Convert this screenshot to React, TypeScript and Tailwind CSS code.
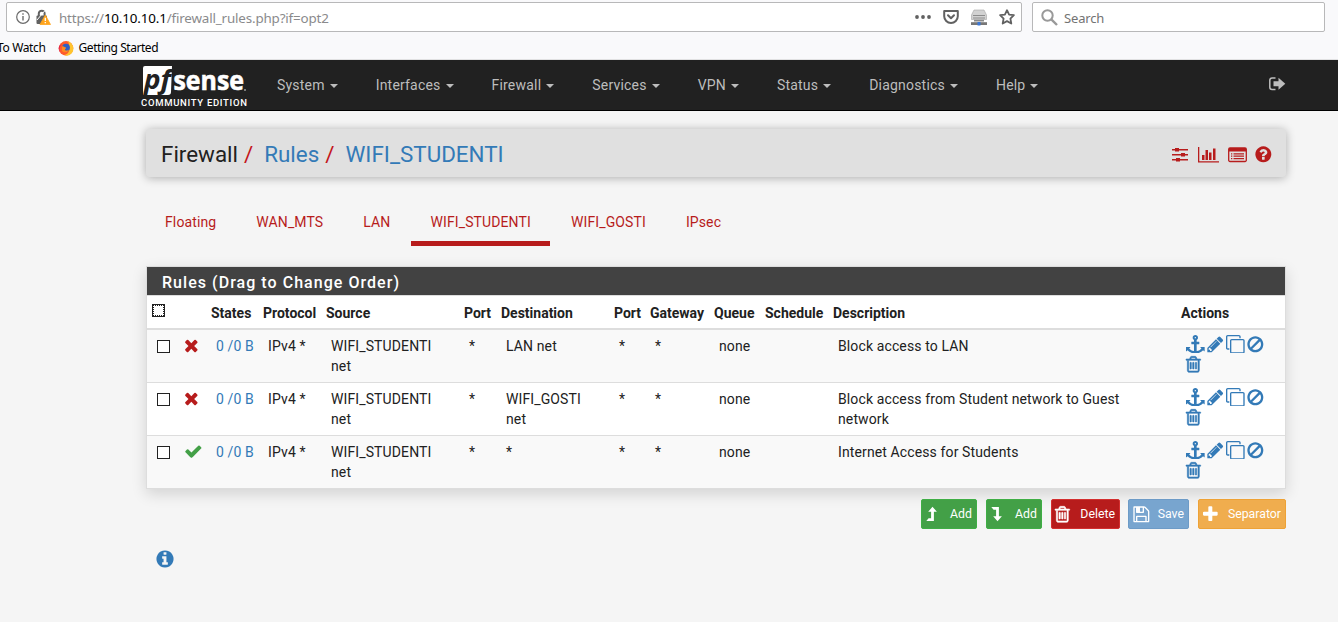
import React from 'react';

const paths = {
  times: 'M1490 1322q0 40-28 68l-136 136q-28 28-68 28t-68-28l-294-294-294 294q-28 28-68 28t-68-28l-136-136q-28-28-28-68t28-68l294-294-294-294q-28-28-28-68t28-68l136-136q28-28 68-28t68 28l294 294 294-294q28-28 68-28t68 28l136 136q28 28 28 68t-28 68l-294 294 294 294q28 28 28 68z',
  check: 'M1671 566q0 40-28 68l-724 724-136 136q-28 28-68 28t-68-28l-136-136-362-362q-28-28-28-68t28-68l136-136q28-28 68-28t68 28l294 295 656-657q28-28 68-28t68 28l136 136q28 28 28 68z',
  plus: 'M1600 736v192q0 40-28 68t-68 28h-416v416q0 40-28 68t-68 28h-192q-40 0-68-28t-28-68v-416h-416q-40 0-68-28t-28-68v-192q0-40 28-68t68-28h416v-416q0-40 28-68t68-28h192q40 0 68 28t28 68v416h416q40 0 68 28t28 68z',
  pencil: 'M491 1536l91-91-235-235-91 91v107h128v128h107zm523-928q0-22-22-22-10 0-17 7l-542 542q-7 7-7 17 0 22 22 22 10 0 17-7l542-542q7-7 7-17zm-54-192l416 416-832 832h-416v-416zm683 96q0 53-37 90l-166 166-416-416 166-165q36-38 90-38 53 0 91 38l235 234q37 39 37 91z',
  trash: 'M704 736v576q0 14-9 23t-23 9h-64q-14 0-23-9t-9-23v-576q0-14 9-23t23-9h64q14 0 23 9t9 23zm256 0v576q0 14-9 23t-23 9h-64q-14 0-23-9t-9-23v-576q0-14 9-23t23-9h64q14 0 23 9t9 23zm256 0v576q0 14-9 23t-23 9h-64q-14 0-23-9t-9-23v-576q0-14 9-23t23-9h64q14 0 23 9t9 23zm128 724v-948h-896v948q0 22 7 40.5t14.5 27 10.5 8.5h832q3 0 10.5-8.5t14.5-27 7-40.5zm-672-1076h448l-48-117q-7-9-17-11h-317q-10 2-17 11zm928 32v64q0 14-9 23t-23 9h-96v948q0 83-47 143.5t-113 60.5h-832q-66 0-113-58.5t-47-141.5v-952h-96q-14 0-23-9t-9-23v-64q0-14 9-23t23-9h309l70-167q15-37 54-63t79-26h320q40 0 79 26t54 63l70 167h309q14 0 23 9t9 23z',
  ban: 'M1440 893q0-161-87-295l-754 753q137 89 297 89 111 0 211.5-43.5t173.5-116.5 116-174.5 43-212.5zm-999 299l755-754q-135-91-300-91-148 0-273 73t-198 199-73 274q0 162 89 299zm1223-299q0 157-61 300t-163.5 246-245 164-298.5 61-298.5-61-245-164-163.5-246-61-300 61-299.5 163.5-245.5 245-164 298.5-61 298.5 61 245 164 163.5 245.5 61 299.5z',
  clone: 'M1664 1632v-1088q0-13-9.5-22.5t-22.5-9.5h-1088q-13 0-22.5 9.5t-9.5 22.5v1088q0 13 9.5 22.5t22.5 9.5h1088q13 0 22.5-9.5t9.5-22.5zm128-1088v1088q0 66-47 113t-113 47h-1088q-66 0-113-47t-47-113v-1088q0-66 47-113t113-47h1088q66 0 113 47t47 113zm-384-384v160h-128v-160q0-13-9.5-22.5t-22.5-9.5h-1088q-13 0-22.5 9.5t-9.5 22.5v1088q0 13 9.5 22.5t22.5 9.5h160v128h-160q-66 0-113-47t-47-113v-1088q0-66 47-113t113-47h1088q66 0 113 47t47 113z',
  anchor: 'M960 256q0-26-19-45t-45-19-45 19-19 45 19 45 45 19 45-19 19-45zm832 928v352q0 22-20 30-8 2-12 2-12 0-23-9l-93-93q-119 143-318.5 226.5t-429.5 83.5-429.5-83.5-318.5-226.5l-93 93q-9 9-23 9-4 0-12-2-20-8-20-30v-352q0-14 9-23t23-9h352q22 0 30 20 8 19-7 35l-100 100q67 91 189.5 153.5t271.5 82.5v-647h-192q-26 0-45-19t-19-45v-128q0-26 19-45t45-19h192v-163q-58-34-93-92.5t-35-128.5q0-106 75-181t181-75 181 75 75 181q0 70-35 128.5t-93 92.5v163h192q26 0 45 19t19 45v128q0 26-19 45t-45 19h-192v647q149-20 271.5-82.5t189.5-153.5l-100-100q-15-16-7-35 8-20 30-20h352q14 0 23 9t9 23z',
  save: 'M512 1536h768v-384h-768v384zm896 0h128v-896q0-14-10-38.5t-20-34.5l-281-281q-10-10-34-20t-39-10v416q0 40-28 68t-68 28h-576q-40 0-68-28t-28-68v-416h-128v1280h128v-416q0-40 28-68t68-28h832q40 0 68 28t28 68v416zm-384-928v-320q0-13-9.5-22.5t-22.5-9.5h-192q-13 0-22.5 9.5t-9.5 22.5v320q0 13 9.5 22.5t22.5 9.5h192q13 0 22.5-9.5t9.5-22.5zm640 32v928q0 40-28 68t-68 28h-1344q-40 0-68-28t-28-68v-1344q0-40 28-68t68-28h928q40 0 88 20t76 48l280 280q28 28 48 76t20 88z',
  question: 'M1024 1376v-192q0-14-9-23t-23-9h-192q-14 0-23 9t-9 23v192q0 14 9 23t23 9h192q14 0 23-9t9-23zm256-672q0-88-55.5-163t-138.5-116-170-41q-243 0-371 213-15 24 8 42l132 100q7 6 19 6 16 0 25-12 53-68 86-92 34-24 86-24 48 0 85.5 26t37.5 59q0 38-20 61t-68 45q-63 28-115.5 86.5t-52.5 125.5v36q0 14 9 23t23 9h192q14 0 23-9t9-23q0-19 21.5-49.5t54.5-49.5q32-18 49-28.5t46-35 44.5-48 28-60.5 12.5-81zm384 192q0 209-103 385.5t-279.5 279.5-385.5 103-385.5-103-279.5-279.5-103-385.5 103-385.5 279.5-279.5 385.5-103 385.5 103 279.5 279.5 103 385.5z',
  info: 'M1152 1376v-160q0-14-9-23t-23-9h-96v-512q0-14-9-23t-23-9h-320q-14 0-23 9t-9 23v160q0 14 9 23t23 9h96v320h-96q-14 0-23 9t-9 23v160q0 14 9 23t23 9h448q14 0 23-9t9-23zm-128-896v-160q0-14-9-23t-23-9h-192q-14 0-23 9t-9 23v160q0 14 9 23t23 9h192q14 0 23-9t9-23zm640 416q0 209-103 385.5t-279.5 279.5-385.5 103-385.5-103-279.5-279.5-103-385.5 103-385.5 279.5-279.5 385.5-103 385.5 103 279.5 279.5 103 385.5z',
};

const Icon: React.FC<{ name: keyof typeof paths; className?: string }> = ({ name, className }) => (
  <svg viewBox="0 0 1792 1792" fill="currentColor" className={className ?? 'size-[18.67px] shrink-0'}>
    <path d={paths[name]} stroke="currentColor" strokeWidth={name === 'trash' ? 55 : 0} />
  </svg>
);

const LevelArrow: React.FC<{ down?: boolean }> = ({ down }) => (
  <svg viewBox="0 0 12 16" fill="currentColor" className="w-3 h-4 shrink-0">
    {down ? (
      <path d="M0.3 1h7.6v9.2h3L6.5 15.3 2.2 10.2h2.9V3.8H2.6z" />
    ) : (
      <path d="M0.3 15h7.6V5.8h3L6.5 0.7 2.2 5.8h2.9v6.4H2.6z" />
    )}
  </svg>
);

const menus = ['System', 'Interfaces', 'Firewall', 'Services', 'VPN', 'Status', 'Diagnostics', 'Help'];

const tabs = ['Floating', 'WAN_MTS', 'LAN', 'WIFI_STUDENTI', 'WIFI_GOSTI', 'IPsec'];

const columns = ['', '', 'States', 'Protocol', 'Source', 'Port', 'Destination', 'Port', 'Gateway', 'Queue', 'Schedule', 'Description', 'Actions'];
const widths = [31, 28, 52, 63, 138, 37, 113, 36, 64, 51, 68, 348, 109];

const rules = [
  { pass: false, dest: 'LAN net', description: 'Block access to LAN' },
  { pass: false, dest: 'WIFI_GOSTI net', description: 'Block access from Student network to Guest network' },
  { pass: true, dest: '*', description: 'Internet Access for Students' },
];

const Browser = () => (
  <div className="h-[60px] bg-[#f9f9fb] border-b border-[#e1e1e2] font-['Noto_Sans',sans-serif] overflow-hidden">
    <div className="flex pt-[2px] pl-[6px] gap-[10px]">
      <div className="w-[1016px] h-[30px] bg-white border border-[#b8b8b9] rounded-[2px] flex items-center pl-[9px] pr-[6px]">
        <svg viewBox="0 0 14 14" className="size-[14px]" fill="none" stroke="#6b6b6b">
          <circle cx="7" cy="7" r="6.3" strokeWidth="1.2" />
          <path d="M7 6v4.6M7 3.3v1.5" strokeWidth="1.4" />
        </svg>
        <svg viewBox="0 0 16 16" className="size-4 ml-[5px]">
          <path d="M3.8 7V4.600a2.900 2.900 0 0 1 5.800 0V7" fill="none" stroke="#616161" strokeWidth="2" />
          <rect x="1.5" y="6.500" width="10.500" height="8.500" rx="1" fill="#616161" />
          <path d="M2 11L10 1.500" stroke="#fff" strokeWidth="1" />
          <path d="M10.300 6l5.200 9.500H5z" fill="#ffa41c" stroke="#ffa41c" strokeWidth=".8" strokeLinejoin="round" />
          <path d="M10.300 8.800v3.200M10.300 13v1.300" stroke="#fff" strokeWidth="1.300" />
        </svg>
        <span className="ml-[8px] mt-[2px] text-[13.4px] leading-5 tracking-[-0.16px] text-[#8a8a8c] whitespace-nowrap w-[600px]">
          https://<span className="text-black">10.10.10.1</span>/firewall_rules.php?if=opt2
        </span>
        <div className="ml-auto flex items-center gap-[11px] text-[#616161]">
          <svg viewBox="0 0 18 16" className="w-[18px] h-4" fill="currentColor">
            <circle cx="3" cy="8" r="1.9" />
            <circle cx="9" cy="8" r="1.9" />
            <circle cx="15" cy="8" r="1.9" />
          </svg>
          <svg viewBox="0 0 16 16" className="size-4" fill="none" stroke="currentColor" strokeWidth="2" strokeLinejoin="round">
            <path d="M1.2 2h13.6v5.2a6.8 6.8 0 0 1-13.6 0z" />
            <path d="M5 6.2l3 3 3-3" strokeLinecap="round" />
          </svg>
          <svg viewBox="0 0 18 17" className="w-[18px] h-[17px]">
            <path d="M4 1h10l2.500 5v4.500h-15V6z" fill="#d2d2d2" stroke="#a5a5a5" strokeWidth=".6" />
            <path d="M3 6.500h12M3 9h12" stroke="#8c8c8c" />
            <path d="M4 10.800h10v1.700H4z" fill="#8a8a8a" />
            <path d="M1 13.200h16v2.800H1z" fill="#777" />
            <path d="M7.500 13h3v3.500h-3z" fill="#3b78d8" />
          </svg>
          <svg viewBox="0 0 16 16" className="size-4" fill="none" stroke="currentColor" strokeWidth="1.8" strokeLinejoin="round">
            <path d="M8 1.2l2.1 4.4 4.8.6-3.5 3.4.9 4.9L8 12.1l-4.3 2.4.9-4.9L1.1 6.2l4.8-.6z" />
          </svg>
        </div>
      </div>
      <div className="w-[293px] h-[30px] bg-white border border-[#b8b8b9] rounded-[2px] flex items-center pl-[8px]">
        <svg viewBox="0 0 17 17" className="size-[17px]" fill="none" stroke="#999" strokeWidth="2">
          <circle cx="6.500" cy="6.500" r="5.200" />
          <path d="M10.300 10.300l5.700 5.700" strokeWidth="2.400" />
        </svg>
        <span className="ml-[6px] mt-[3px] text-[13px] tracking-[-0.15px] text-[#737373]">Search</span>
      </div>
    </div>
    <div className="flex items-center h-[28px] mt-[2px] text-[12px] text-black -ml-[3px] whitespace-nowrap">
      <span className="tracking-[-0.35px]">To Watch</span>
      <svg viewBox="0 0 16 16" className="size-4 ml-[12px]">
        <circle cx="8" cy="8.300" r="7.200" fill="#ff5a2c" />
        <path d="M1.200 6a7.300 7.300 0 0 0 2 8A7.200 7.200 0 0 1 4 4z" fill="#e3254f" />
        <path d="M10 1a8 8 0 0 1 4 12A7 7 0 0 1 6 15c5-1 7-5 4-14z" fill="#ffc42e" />
        <circle cx="8" cy="7.600" r="3.900" fill="#2f5fc4" />
        <path d="M4 6.500c2-.6 2 1 4 1 .5 1-1.500 1.500-1 2.500 1 1 3 .5 4-.5-.5 3-5 4-7 1.300z" fill="#ff8a1f" />
      </svg>
      <span className="ml-[5px] tracking-[-0.45px]">Getting Started</span>
    </div>
  </div>
);

const Navbar = () => (
  <nav className="h-[51px] bg-[#212121] border-b border-black flex text-[#bdbdbd] pl-[140px]">
    <div className="w-[137px] shrink-0">
      <svg viewBox="0 0 110 50" className="w-[110px] h-[50px]">
        <path d="M5 6h27l-1 26a3 3 0 0 1-3 3H3V8q0-2 2-2z" fill="#fff" />
        <text x="4" y="28.500" fontFamily="Open Sans" fontWeight="700" fontStyle="italic" fontSize="27" textLength="27" lengthAdjust="spacingAndGlyphs" fill="#212121">pf</text>
        <text x="33.500" y="30" fontFamily="Open Sans" fontWeight="700" fontSize="27" textLength="70.500" lengthAdjust="spacingAndGlyphs" fill="#fff" stroke="#fff" strokeWidth=".6">sense</text>
        <circle cx="105" cy="30" r="1" fill="#999" />
        <text x="1" y="46" fontFamily="Roboto" fontWeight="500" fontSize="9.500" textLength="106" fill="#fff">COMMUNITY EDITION</text>
      </svg>
    </div>
    <ul className="flex items-center gap-[38px] text-[14px] tracking-[0.2px]">
      {menus.map((menu) => (
        <li key={menu} className="flex items-center">
          {menu}
          <span className="ml-[5px] mt-[2px] border-x-4 border-x-transparent border-t-4 border-t-[#bdbdbd]" />
        </li>
      ))}
    </ul>
    <svg viewBox="0 0 17 14" className="w-[17px] h-[14px] ml-auto mr-[52px] mt-[17px]" fill="#bdbdbd">
      <path d="M6.500 1H3a2.200 2.200 0 0 0-2.200 2.200v7A2.200 2.200 0 0 0 3 12.400h3.500" fill="none" stroke="#bdbdbd" strokeWidth="1.500" />
      <path d="M4.500 4.300h5V0.800L16.300 6.700 9.500 12.800V9.200h-5z" />
    </svg>
  </nav>
);

const Header = () => (
  <header className="h-[48px] mt-[18px] bg-[#e0e0e0] rounded-[4px] shadow-[0_1px_10px_rgba(0,0,0,0.3)] flex items-center justify-between pl-[15px] pr-[13px] pt-[3px]">
    <h1 className="text-[22.4px] leading-none text-[#212121] flex">
      Firewall<span className="text-[#c4161c] ml-[6px]">/</span>
      <span className="text-[#337ab7] ml-[11px]">Rules</span>
      <span className="text-[#c4161c] ml-[6px]">/</span>
      <span className="text-[#337ab7] ml-[11px]">WIFI_STUDENTI</span>
    </h1>
    <div className="flex items-center text-[#b71c1c]">
      <svg viewBox="0 0 16 16" className="size-4" fill="currentColor">
        <path d="M0 2h16v1.500H0zM0 7h16v1.500H0zM0 12h16v1.500H0z" />
        <path d="M3 1h4v3.500H3zM9 6h4v3.500H9zM4 11h4v3.500H4z" />
      </svg>
      <svg viewBox="0 0 21 16" className="w-[21px] h-4 ml-[10px]" fill="currentColor">
        <path d="M0 0h1.300v14.200H21v1.300H0zM4 8h2.500v5H4zM7.500 3H10v10H7.500zM11 5.500h2.500V13H11zM15 1.500h2.500V13H15z" />
      </svg>
      <svg viewBox="0 0 19 16" className="w-[19px] h-4 ml-[9px]">
        <path d="M2 1h15a1.300 1.300 0 0 1 1.300 1.300v10.900a1.300 1.300 0 0 1-1.300 1.300H2a1.300 1.300 0 0 1-1.300-1.300V2.300A1.300 1.300 0 0 1 2 1z" fill="none" stroke="currentColor" strokeWidth="1.300" />
        <path d="M1 1h17v3.500H1zM3 6.200h1.300v1.200H3zM3 8.600h1.300v1.200H3zM3 11h1.300v1.200H3zM5.500 6.200h10.500v1.200H5.500zM5.500 8.600h10.500v1.200H5.500zM5.500 11h10.500v1.200H5.500z" fill="currentColor" />
      </svg>
      <Icon name="question" className="size-[18.67px] ml-[7px]" />
    </div>
  </header>
);

const RulesTable = () => (
  <section className="mt-[20px] border border-[#ddd] w-[1140px] shadow-[0_5px_14px_rgba(0,0,0,0.14)] bg-white">
    <h2 className="h-[28px] bg-[#424242] text-white text-[16px] leading-[31px] font-medium tracking-[1.04px] pl-[15px]">
      Rules (Drag to Change Order)
    </h2>
    <table className="table-fixed w-[1138px] border-collapse text-[14px] leading-5">
      <colgroup>
        {widths.map((width, i) => (
          <col key={i} style={{ width }} />
        ))}
      </colgroup>
      <thead>
        <tr className="h-[33px] border-t border-[#ddd] border-b-2">
          {columns.map((column, i) => (
            <th key={i} className="px-[5px] pt-[2px] text-left font-bold align-middle whitespace-nowrap">
              {i === 0 ? (
                <span className="block size-[13px] border border-[#222] bg-white -mt-[4px]">
                  <span className="block size-[11px] border border-dotted border-[#222]" />
                </span>
              ) : (
                column
              )}
            </th>
          ))}
        </tr>
      </thead>
      <tbody className="tracking-[0.12px]">
        {rules.map((rule, i) => (
          <tr key={i} className="h-[53px] border-b border-[#ddd] last:border-b-0 odd:bg-[#f9f9f9] align-top [&>td]:px-[10px] [&>td]:pt-[6px] [&>td]:pb-[6px]">
            <td>
              <span className="block size-[13px] border border-[#222] bg-white mt-[4px]" />
            </td>
            <td className="!px-0">
              <div className={rule.pass ? 'text-[#43a047] ml-[6px]' : 'text-[#b71c1c] ml-[4px]'}>
                <Icon name={rule.pass ? 'check' : 'times'} />
              </div>
            </td>
            <td className="text-[#337ab7] whitespace-nowrap">0 /0 B</td>
            <td className="whitespace-nowrap">IPv4 *</td>
            <td>WIFI_STUDENTI net</td>
            <td>*</td>
            <td>{rule.dest}</td>
            <td>*</td>
            <td>*</td>
            <td>none</td>
            <td />
            <td>{rule.description}</td>
            <td className="!pr-0 text-[#337ab7]">
              <div className="flex h-5 items-start -mt-[1px]">
                <Icon name="anchor" />
                <Icon name="pencil" className="size-[18.67px] ml-[1px]" />
                <Icon name="clone" className="size-[18.67px] ml-[2px]" />
                <Icon name="ban" className="size-[18.67px] ml-[1.500px]" />
              </div>
              <Icon name="trash" className="size-[18.67px] -ml-[2px]" />
            </td>
          </tr>
        ))}
      </tbody>
    </table>
  </section>
);

const Actions = () => (
  <div className="flex justify-end gap-[9px] mt-[10px] text-white text-[12.3px] [&>button]:h-[30px] [&>button]:flex [&>button]:items-center [&>button]:justify-between [&>button]:rounded-[2px] [&>button]:border [&>button]:pr-[4px]">
    <button className="w-[56px] bg-[#43a047] border-[#3fae45] pl-[4px]"><LevelArrow />Add</button>
    <button className="w-[56px] bg-[#43a047] border-[#3fae45] pl-[4px]"><LevelArrow down />Add</button>
    <button className="w-[69px] bg-[#b71c1c] border-[#d32f2f] pl-[1px]"><Icon name="trash" />Delete</button>
    <button className="w-[61px] bg-[#78a5cf] border-[#6d9bc7] pl-[3px] -ml-px"><Icon name="save" />Save</button>
    <button className="w-[88px] bg-[#f0ad4e] border-[#eea236] pl-[2px]"><Icon name="plus" />Separator</button>
  </div>
);

export default function App() {
  return (
    <div className="h-[622px] w-[1338px] overflow-hidden bg-[#f5f5f5] font-[Roboto,sans-serif] text-[14px] text-[#212121]">
      <Browser />
      <Navbar />
      <main className="w-[1140px] ml-[146px]">
        <Header />
        <ul className="flex mt-[25px] text-[#b71c1c] tracking-[0.12px]">
          {tabs.map((tab) => (
            <li
              key={tab}
              className={`h-[44px] px-[19px] pt-[10px] leading-5 border-b-[5px] mr-[2px] ${tab === 'WIFI_STUDENTI' ? 'border-[#b71c1c]' : 'border-transparent'}`}
            >
              {tab}
            </li>
          ))}
        </ul>
        <RulesTable />
        <Actions />
        <Icon name="info" className="size-5 mt-[20px] ml-[9px] text-[#337ab7]" />
      </main>
    </div>
  );
}
